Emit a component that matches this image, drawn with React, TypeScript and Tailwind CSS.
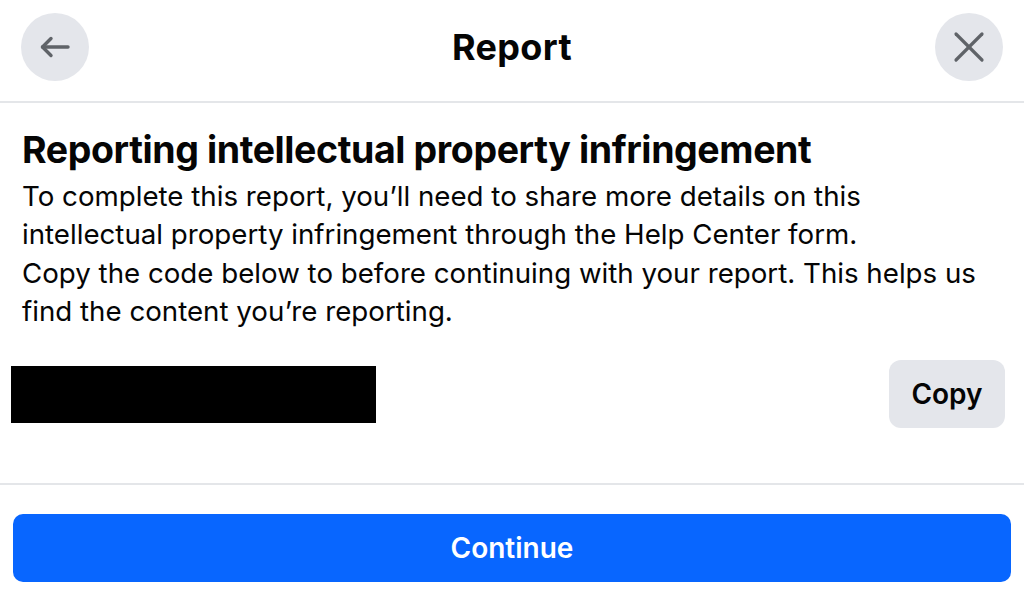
import React from "react";

const font = { fontFamily: 'Inter, "Liberation Sans", sans-serif' };

function BackIcon() {
  return (
    <svg width="32" height="24" viewBox="0 0 32 24" fill="none" stroke="#5f6368" strokeWidth="3.4" strokeLinecap="round" strokeLinejoin="round">
      <path d="M29 12H3.5" />
      <path d="M12 3.5L3.5 12L12 20.5" />
    </svg>
  );
}

function CloseIcon() {
  return (
    <svg width="32" height="32" viewBox="0 0 32 32" fill="none" stroke="#5f6368" strokeWidth="3.2" strokeLinecap="round">
      <path d="M3 3L29 29" />
      <path d="M29 3L3 29" />
    </svg>
  );
}

export default function App() {
  return (
    <div className="h-[601px] w-[1024px] overflow-hidden bg-white text-[#050505]" style={font}>
      <header className="flex h-[103px] items-center justify-between border-b-2 border-[#e4e6e9] px-[21px] pb-[8px]">
        <button className="flex h-[68px] w-[68px] items-center justify-center rounded-full bg-[#e4e6eb]" aria-label="Back">
          <BackIcon />
        </button>
        <h1 className="text-[36px] font-bold tracking-[0.3px]">Report</h1>
        <button className="flex h-[68px] w-[68px] items-center justify-center rounded-full bg-[#e4e6eb]" aria-label="Close">
          <CloseIcon />
        </button>
      </header>

      <section className="px-[22px] pt-[25px]">
        <h2 className="whitespace-nowrap text-[37.5px] font-bold leading-[44px] tracking-[-0.4px]">
          Reporting intellectual property infringement
        </h2>
        <p className="mt-[5px] whitespace-nowrap text-[27.7px] leading-[38.4px]">
          To complete this report, you’ll need to share more details on this
          <br />
          intellectual property infringement through the Help Center form.
          <br />
          Copy the code below to before continuing with your report. This helps us
          <br />
          find the content you’re reporting.
        </p>
      </section>

      <div className="flex items-center justify-between pl-[11px] pr-[19px] pt-[29px] pb-[55px]">
        <div className="mt-[2px] h-[57px] w-[365px] bg-black" />
        <button className="flex h-[68px] w-[116px] items-center justify-center rounded-[12px] bg-[#e4e6eb] text-[28px] font-semibold">
          Copy
        </button>
      </div>

      <div className="border-t-2 border-[#e4e6e9] px-[13px] pt-[29px]">
        <button className="flex h-[68px] w-full items-center justify-center rounded-[10px] bg-[#0866ff] text-[28px] font-semibold text-white">
          Continue
        </button>
      </div>
    </div>
  );
}
